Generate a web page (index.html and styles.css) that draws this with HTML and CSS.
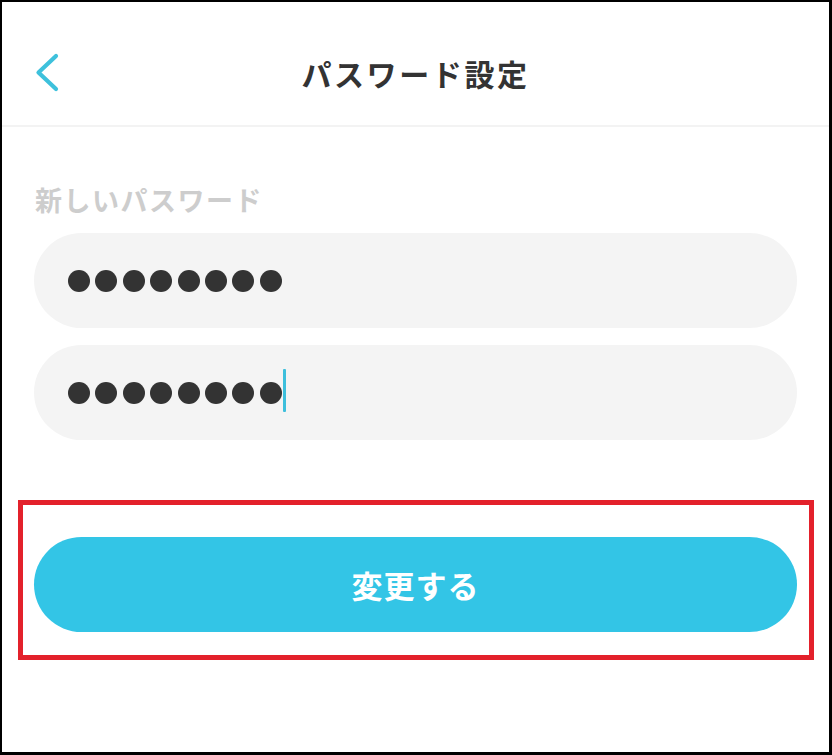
FILE: index.html
```html
<!DOCTYPE html>
<html lang="ja">
<head>
<meta charset="utf-8">
<title>パスワード設定</title>
<link rel="stylesheet" href="styles.css">
</head>
<body>
<div class="screen">
  <header class="header">
    <div class="header-row">
      <a class="back" aria-label="戻る">
        <svg width="26" height="40" viewBox="0 0 26 40" fill="none">
          <path d="M22 3 L4.5 19.5 L22 36" stroke="#3ec1dc" stroke-width="4.2" stroke-linecap="round" stroke-linejoin="round"/>
        </svg>
      </a>
      <h1 class="title">パスワード設定</h1>
      <span class="spacer"></span>
    </div>
  </header>
  <main class="content">
    <div class="label">新しいパスワード</div>
    <div class="field">
      <span class="dots" aria-label="password">
        <i></i><i></i><i></i><i></i><i></i><i></i><i></i><i></i>
      </span>
    </div>
    <div class="field field-gap">
      <span class="dots" aria-label="password">
        <i></i><i></i><i></i><i></i><i></i><i></i><i></i><i></i>
      </span>
      <span class="caret"></span>
    </div>
    <div class="highlight">
      <button class="submit" type="button">変更する</button>
    </div>
  </main>
</div>
</body>
</html>
```

FILE: styles.css
```css
* { box-sizing: border-box; }
html, body { margin: 0; padding: 0; background: #fff; }
body {
  font-family: "Noto Sans CJK JP", "Noto Sans", sans-serif;
  color: #333;
}
.screen {
  width: 832px;
  height: 755px;
  border-style: solid;
  border-color: #000;
  border-width: 2px 3px 3px 2px;
  background: #fff;
  overflow: hidden;
}
.header {
  height: 125px;
  padding-top: 43px;
  border-bottom: 2px solid #f3f3f3;
}
.header-row {
  height: 56px;
  display: grid;
  grid-template-columns: 1fr auto 1fr;
  align-items: center;
  padding: 0 32px;
}
.back {
  display: flex;
  align-items: center;
  width: 26px;
  height: 40px;
}
.back svg { display: block; }
.title {
  margin: 0;
  font-size: 30px;
  font-weight: 700;
  letter-spacing: 2.6px;
  line-height: 40px;
  color: #333;
}
.content {
  padding: 0 32px;
}
.label {
  margin-top: 55px;
  margin-left: 1px;
  font-size: 27px;
  line-height: 36px;
  font-weight: 700;
  color: #cdcdcd;
  letter-spacing: 1.5px;
}
.field {
  margin-top: 15px;
  height: 95px;
  border-radius: 48px;
  background: #f4f4f4;
  display: flex;
  align-items: center;
  padding-left: 34px;
}
.field-gap { margin-top: 17px; }
.dots {
  display: flex;
  gap: 5.4px;
}
.dots i {
  display: block;
  width: 22px;
  height: 22px;
  border-radius: 50%;
  background: #333;
}
.caret {
  width: 3px;
  height: 43px;
  margin-left: 1px;
  margin-top: -4px;
  border-radius: 1px;
  background: #3dbfdc;
}
.highlight {
  margin-top: 60px;
  margin-left: -16px;
  width: 796px;
  height: 160px;
  border: 5px solid #e3212b;
  padding: 32px 12px 0 11px;
}
.submit {
  display: block;
  width: 100%;
  height: 95px;
  border: 0;
  border-radius: 48px;
  background: #33c5e6;
  color: #fff;
  font-family: "Noto Sans CJK JP", "Noto Sans", sans-serif;
  font-size: 31px;
  font-weight: 700;
  letter-spacing: 1px;
  padding: 0;
}
```
